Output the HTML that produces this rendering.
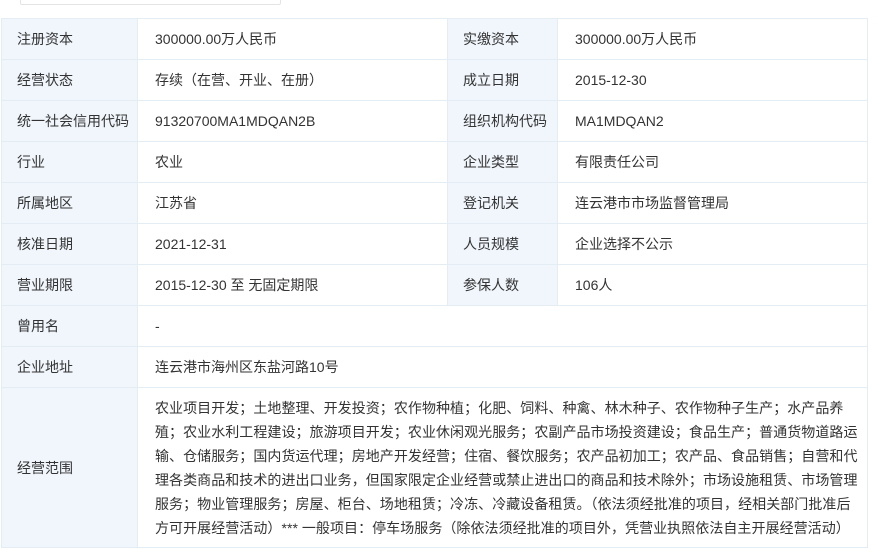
<!DOCTYPE html><html><head><meta charset="utf-8"><style>
body{margin:0;width:880px;height:559px;background:#fff;font-family:"Liberation Sans","Noto Sans CJK SC",sans-serif;font-size:14px;color:#333;position:relative;overflow:hidden}
.top{position:absolute;left:20px;top:-10px;width:259px;height:13px;border:1px solid #e4e4e4;border-radius:2px}
table{position:absolute;left:1px;top:18px;border-collapse:collapse;width:866px;table-layout:fixed}
td{border:1px solid #e4ecf4;height:40px;padding:0 0 0 15px;vertical-align:middle;line-height:20px;white-space:nowrap}
td.v{padding-left:17px}
td.l{background:#f0f6fc;}
td.long{line-height:24px;padding:8px 0 7px 17px;height:auto;letter-spacing:0.05px}
</style></head><body>
<div class="top"></div>
<table>
<colgroup><col style="width:136px"><col style="width:310px"><col style="width:110px"><col style="width:310px"></colgroup>
<tr><td class="l">注册资本</td><td class="v">300000.00万人民币</td><td class="l">实缴资本</td><td class="v">300000.00万人民币</td></tr>
<tr><td class="l">经营状态</td><td class="v">存续（在营、开业、在册）</td><td class="l">成立日期</td><td class="v">2015-12-30</td></tr>
<tr><td class="l">统一社会信用代码</td><td class="v">91320700MA1MDQAN2B</td><td class="l">组织机构代码</td><td class="v">MA1MDQAN2</td></tr>
<tr><td class="l">行业</td><td class="v">农业</td><td class="l">企业类型</td><td class="v">有限责任公司</td></tr>
<tr><td class="l">所属地区</td><td class="v">江苏省</td><td class="l">登记机关</td><td class="v">连云港市市场监督管理局</td></tr>
<tr><td class="l">核准日期</td><td class="v">2021-12-31</td><td class="l">人员规模</td><td class="v">企业选择不公示</td></tr>
<tr><td class="l">营业期限</td><td class="v">2015-12-30 至 无固定期限</td><td class="l">参保人数</td><td class="v">106人</td></tr>
<tr><td class="l">曾用名</td><td colspan="3" class="v">-</td></tr>
<tr><td class="l">企业地址</td><td colspan="3" class="v">连云港市海州区东盐河路10号</td></tr>
<tr><td class="l">经营范围</td><td colspan="3" class="long">农业项目开发；土地整理、开发投资；农作物种植；化肥、饲料、种禽、林木种子、农作物种子生产；水产品养<br>殖；农业水利工程建设；旅游项目开发；农业休闲观光服务；农副产品市场投资建设；食品生产；普通货物道路运<br>输、仓储服务；国内货运代理；房地产开发经营；住宿、餐饮服务；农产品初加工；农产品、食品销售；自营和代<br>理各类商品和技术的进出口业务，但国家限定企业经营或禁止进出口的商品和技术除外；市场设施租赁、市场管理<br>服务；物业管理服务；房屋、柜台、场地租赁；冷冻、冷藏设备租赁。（依法须经批准的项目，经相关部门批准后<br>方可开展经营活动）*** 一般项目：停车场服务（除依法须经批准的项目外，凭营业执照依法自主开展经营活动）</td></tr>
</table>
</body></html>
